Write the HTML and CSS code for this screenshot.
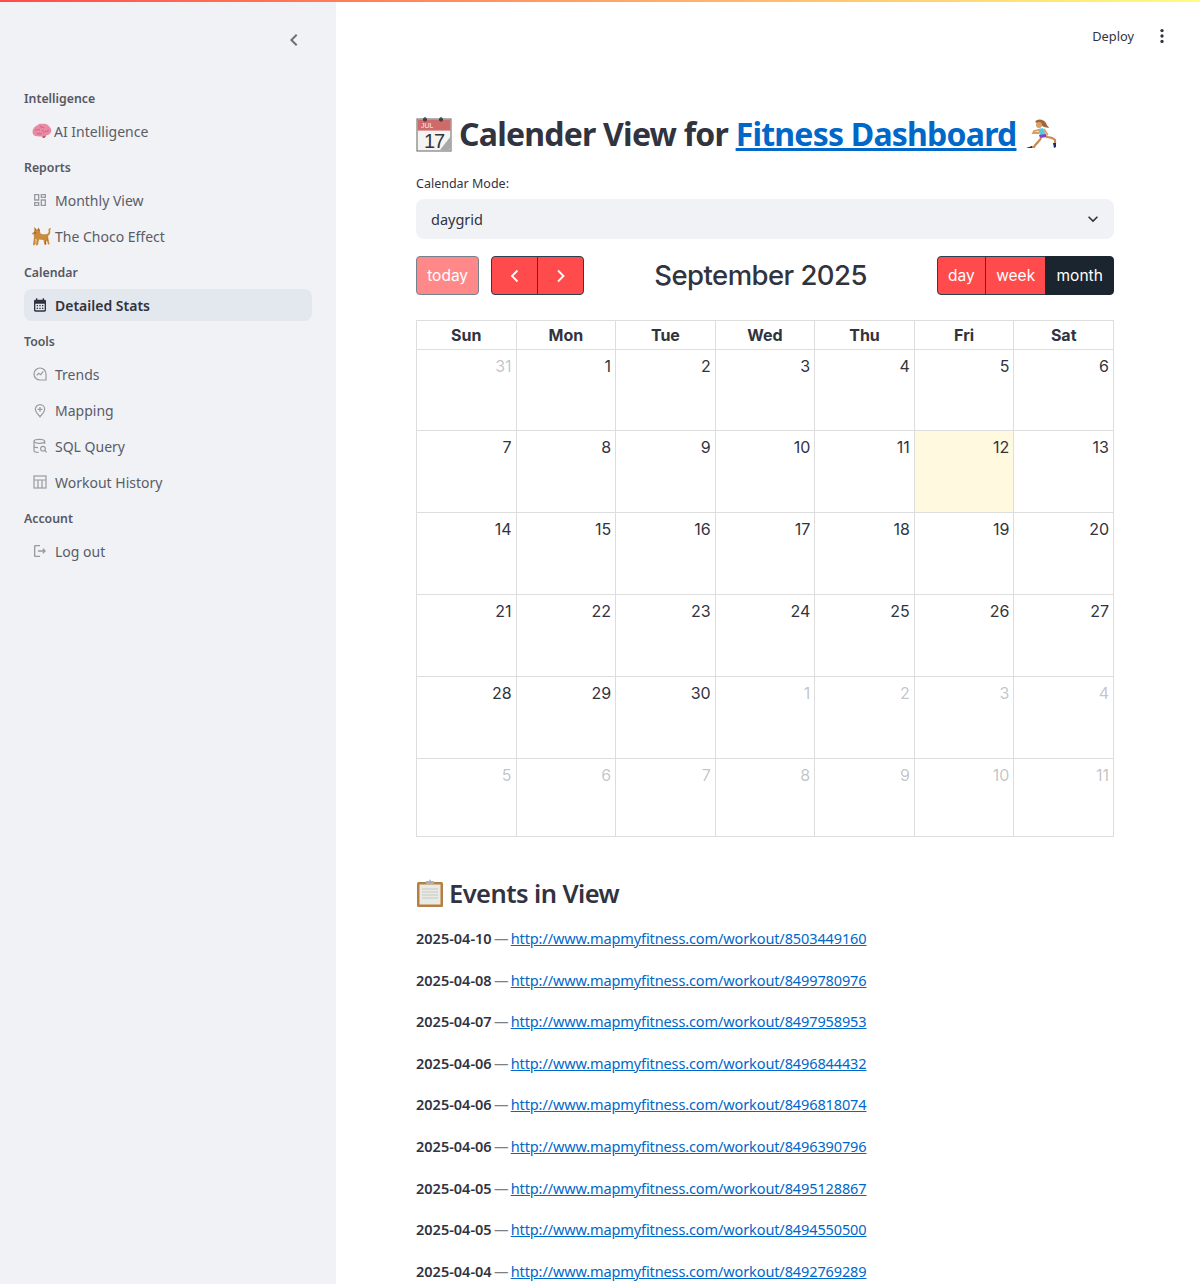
FILE: index.html
```html
<!DOCTYPE html>
<html lang="en">
<head>
<meta charset="utf-8">
<title>Calender View for Fitness Dashboard</title>
<link rel="stylesheet" href="styles.css">
</head>
<body>
<div class="decoration"></div>
<div class="app">
  <aside class="sidebar">
    <div class="side-head">
      <svg class="collapse" viewBox="0 0 24 24" width="24" height="24"><path d="M15.4 7.4 14 6l-6 6 6 6 1.4-1.4L10.8 12z" fill="#6b6d78"/></svg>
    </div>
    <nav class="nav">
      <div class="group-label">Intelligence</div>
      <a class="item">
        <svg class="ico" viewBox="0 0 20 20" width="20" height="20"><path d="M.5 11c0-3 2-5.500 4.500-6.500C6.500 2.500 9 2.500 11 3c2.500-.5 5 .5 6 2.500 2 1 2.800 3.500 2 5.500-.5 2-2.500 3-4.500 3.200-1 .8-1.500 2.800-3 2.800-1 0-1.500-.8-2-1.800-1.500.5-2.500.3-3.500 0C3 15.500.5 14 .5 11z" fill="#ea89a4"/><path d="M3 9.500c2-2 3 0 5-1M8 5c1 2 3 1 4 2M5 12.500c2 0 3 1 5 0M13 10c1 1 3 0 4-1M10 9c1 1 2 1 2 3" stroke="#c65f7f" stroke-width=".9" fill="none"/><path d="M10.500 15.500c.5 1 1 1.500 1.500 1.500 1 0 1.500-1.500 2-2.500z" fill="#b9566f"/></svg>
        <span>AI Intelligence</span>
      </a>
      <div class="group-label">Reports</div>
      <a class="item">
        <svg class="ico mi" viewBox="0 0 24 24" width="16" height="16"><path d="M19 5v2h-4V5h4M9 5v6H5V5h4m10 8v6h-4v-6h4M9 17v2H5v-2h4M21 3h-8v6h8V3zM11 3H3v10h8V3zm10 8h-8v10h8V11zM11 15H3v6h8v-6z"/></svg>
        <span>Monthly View</span>
      </a>
      <a class="item">
        <svg class="ico" viewBox="0 0 20 20" width="20" height="20"><path d="M2.500 1 4 3.500l2-.5.500-1.500L8 5l.5 2.500c2 1 4.500 1 6.500.5 1.500-1 2-2 1.500-3.500-.4-1.200.8-2.500 2-2.500l.5 1c-.8 0-1 .5-.8 1.500.5 2.500-.5 4.500-2.200 5.500l1 6.500 1 1.500-2 .5-1-4-1 1.500.5 2.500-2 .5-1-5-4.500-.5-1 5.500-2 .5.500-6-1-1-.5 6.500-2 .5 1-9-.5-2-2-1L2 6z" fill="#ca8b3e"/><path d="M2.500 1 4 3.500 3.500 5zM6.500 1.500 8 5 6.500 4.500zM2 6l2.500.5L3 8zM13 13l1 5h-1zM4 12l-.5 6H3zM15.500 9l.8 7h-.5z" fill="#8a5a24"/></svg>
        <span class="after-emoji">The Choco Effect</span>
      </a>
      <div class="group-label">Calendar</div>
      <a class="item active">
        <svg class="ico mi" viewBox="0 0 24 24" width="16" height="16"><path d="M19 4h-1V2h-2v2H8V2H6v2H5c-1.100 0-2 .9-2 2v14c0 1.100.9 2 2 2h14c1.100 0 2-.9 2-2V6c0-1.100-.9-2-2-2zm0 16H5V10h14v10zM9 14H7v-2h2v2zm4 0h-2v-2h2v2zm4 0h-2v-2h2v2zm-8 4H7v-2h2v2zm4 0h-2v-2h2v2zm4 0h-2v-2h2v2z"/></svg>
        <span>Detailed Stats</span>
      </a>
      <div class="group-label">Tools</div>
      <a class="item">
        <svg class="ico ms" viewBox="0 0 24 24" width="16" height="16"><path d="M21 21h-9a9 9 0 1 1 9-9z"/><path d="M7 14l3-3 3 2 4-5"/></svg>
        <span>Trends</span>
      </a>
      <a class="item">
        <svg class="ico ms" viewBox="0 0 24 24" width="16" height="16"><path d="M12 22c-1-2-7-5-7-11a7 7 0 0 1 14 0c0 6-6 9-7 11z"/><path d="M12 7.500v7M8.500 11h7"/></svg>
        <span>Mapping</span>
      </a>
      <a class="item">
        <svg class="ico ms" viewBox="0 0 24 24" width="16" height="16"><ellipse cx="11" cy="5" rx="8" ry="3"/><path d="M3 5v14c0 1.500 3 2.500 7 2.500M19 5v4M3 12c0 1.500 3 2.500 6 2.500"/><circle cx="16.500" cy="16" r="3.500"/><path d="M19 18.500l3 3"/></svg>
        <span>SQL Query</span>
      </a>
      <a class="item">
        <svg class="ico ms" viewBox="0 0 24 24" width="16" height="16"><rect x="3" y="3" width="18" height="18"/><path d="M3 9h18M9 9v12M15 9v12"/></svg>
        <span>Workout History</span>
      </a>
      <div class="group-label">Account</div>
      <a class="item">
        <svg class="ico mi" viewBox="0 0 24 24" width="16" height="16"><path d="M17 8l-1.410 1.410L17.170 11H9v2h8.170l-1.580 1.580L17 16l4-4zM5 5h7V3H5c-1.100 0-2 .9-2 2v14c0 1.100.9 2 2 2h7v-2H5V5z"/></svg>
        <span>Log out</span>
      </a>
    </nav>
  </aside>
  <main class="main">
    <header class="topbar">
      <span class="deploy">Deploy</span>
      <svg class="kebab" viewBox="0 0 24 24" width="20" height="20"><circle cx="12" cy="5.500" r="2"/><circle cx="12" cy="12" r="2"/><circle cx="12" cy="18.500" r="2"/></svg>
    </header>
    <div class="content">
      <h1 class="title">
        <svg class="emoji-cal" viewBox="0 0 36 36" width="36" height="36">
          <rect x="1" y="3" width="34" height="32" fill="#f4f4f4" stroke="#7d7d7d" stroke-width="1.200"/>
          <rect x="1.600" y="3.600" width="32.800" height="11" fill="#cf6a6a"/>
          <circle cx="9" cy="3.500" r="2" fill="#333"/><circle cx="25" cy="3.500" r="2" fill="#333"/>
          <path d="M9 1v5M25 1v5" stroke="#555" stroke-width="1"/>
          <text x="5" y="12" class="cal-mon">JUL</text>
          <text x="8" y="32" class="cal-day">17</text>
          <path d="M35 20 24 34h9l2-2z" fill="#a8a8a8"/>
        </svg>
        <span>Calender View for <a class="title-link">Fitness Dashboard</a></span>
        <svg class="emoji-run" viewBox="0 0 34 34" width="34" height="34">
          <path d="M11 5c2-4 9-3 11 1 1 3 3 4 3 5l-5-1-3-2z" fill="#a0683a"/>
          <circle cx="15" cy="8" r="3" fill="#d9a066"/>
          <path d="M14 12l5-1 3 7-6 1z" fill="#5cc8dc"/>
          <path d="M15 18l7-1 1 3-7 1z" fill="#8a3fc2"/>
          <path d="M15 13l-5 1-1 2 6 0M20 12l3 5 1 1" stroke="#d9a066" stroke-width="1.800" fill="none"/>
          <path d="M17 21c-1 3-5 5-7 9l-3 0M22 20c3 0 7 1 9 3l0 5" stroke="#c48a58" stroke-width="2.200" fill="none"/>
          <path d="M2 31h6v-2l-3 1zM29 26l3 0 0 4-2 1z" fill="#1f2a6d"/>
        </svg>
      </h1>
      <label class="field-label">Calendar Mode:</label>
      <div class="select">
        <span>daygrid</span>
        <svg viewBox="0 0 24 24" width="20" height="20"><path d="M16.600 8.600 12 13.200 7.400 8.600 6 10l6 6 6-6z" fill="#31333f"/></svg>
      </div>
      <div class="cal-toolbar">
        <div class="tb-chunk">
          <button class="btn today">today</button>
          <div class="btn-group">
            <button class="btn nav-btn"><svg viewBox="0 0 16 16" width="16" height="16"><path d="M10.500 2.500 5 8l5.500 5.500" fill="none" stroke="#fff" stroke-width="1.800"/></svg></button>
            <button class="btn nav-btn"><svg viewBox="0 0 16 16" width="16" height="16"><path d="M5 2.500 10.500 8 5 13.500" fill="none" stroke="#fff" stroke-width="1.800"/></svg></button>
          </div>
        </div>
        <h2 class="cal-title">September 2025</h2>
        <div class="btn-group">
          <button class="btn">day</button>
          <button class="btn">week</button>
          <button class="btn on">month</button>
        </div>
      </div>
      <table class="cal">
        <thead><tr><th>Sun</th><th>Mon</th><th>Tue</th><th>Wed</th><th>Thu</th><th>Fri</th><th>Sat</th></tr></thead>
        <tbody>
          <tr class="r1"><td class="off">31</td><td>1</td><td>2</td><td>3</td><td>4</td><td>5</td><td>6</td></tr>
          <tr><td>7</td><td>8</td><td>9</td><td>10</td><td>11</td><td class="now">12</td><td>13</td></tr>
          <tr><td>14</td><td>15</td><td>16</td><td>17</td><td>18</td><td>19</td><td>20</td></tr>
          <tr><td>21</td><td>22</td><td>23</td><td>24</td><td>25</td><td>26</td><td>27</td></tr>
          <tr><td>28</td><td>29</td><td>30</td><td class="off">1</td><td class="off">2</td><td class="off">3</td><td class="off">4</td></tr>
          <tr class="r6"><td class="off">5</td><td class="off">6</td><td class="off">7</td><td class="off">8</td><td class="off">9</td><td class="off">10</td><td class="off">11</td></tr>
        </tbody>
      </table>
      <h2 class="events-title">
        <svg viewBox="0 0 28 30" width="28" height="30"><rect x="1" y="4" width="26" height="25" rx="1.500" fill="#b5803f"/><rect x="3.500" y="6.500" width="21" height="20" fill="#e9e9e6"/><path d="M6 11h16M6 14h16M6 17h16M6 20h16" stroke="#d2d2d0" stroke-width="1.500"/><path d="M10 6V3h3l1-2 1 2h3v3z" fill="#a9b0b8"/></svg>
        <span>Events in View</span>
      </h2>
      <ul class="events">
        <li><b>2025-04-10</b> <i>—</i> <a>http://www.mapmyfitness.com/workout/8503449160</a></li>
        <li><b>2025-04-08</b> <i>—</i> <a>http://www.mapmyfitness.com/workout/8499780976</a></li>
        <li><b>2025-04-07</b> <i>—</i> <a>http://www.mapmyfitness.com/workout/8497958953</a></li>
        <li><b>2025-04-06</b> <i>—</i> <a>http://www.mapmyfitness.com/workout/8496844432</a></li>
        <li><b>2025-04-06</b> <i>—</i> <a>http://www.mapmyfitness.com/workout/8496818074</a></li>
        <li><b>2025-04-06</b> <i>—</i> <a>http://www.mapmyfitness.com/workout/8496390796</a></li>
        <li><b>2025-04-05</b> <i>—</i> <a>http://www.mapmyfitness.com/workout/8495128867</a></li>
        <li><b>2025-04-05</b> <i>—</i> <a>http://www.mapmyfitness.com/workout/8494550500</a></li>
        <li><b>2025-04-04</b> <i>—</i> <a>http://www.mapmyfitness.com/workout/8492769289</a></li>
      </ul>
    </div>
  </main>
</div>
</body>
</html>
```
FILE: styles.css
```css
* { box-sizing: border-box; }
html, body { margin: 0; height: 100%; overflow: hidden; }
body { font-family: "Noto Sans", sans-serif; color: #31333f; background: #fff; }
.decoration { position: absolute; top: 0; left: 0; right: 0; height: 2px; background: linear-gradient(90deg, #ff4b4b, #fffd80); z-index: 2; }
.app { display: flex; height: 1284px; }

.sidebar { width: 336px; flex: none; background: #f0f2f6; padding: 0 24px; }
.side-head { height: 86px; display: flex; justify-content: flex-end; padding: 28px 6px 0 0; }
.collapse { display: block; }
.nav { display: flex; flex-direction: column; }
.group-label { height: 24px; line-height: 26px; margin: 8px 0 5px; font-size: 12.300px; font-weight: 600; color: #565863; }
.group-label:first-child { margin-top: 0; }
.item { display: flex; align-items: center; height: 32px; padding-left: 8px; margin-bottom: 4px; border-radius: 8px; font-size: 14px; color: #5a5c67; }
.item + .group-label { margin-top: 4px; }
.item .ico { flex: none; }
.item span { margin-left: 2px; }
.item span.after-emoji { margin-left: 3px; }
.item .mi, .item .ms { margin: 0 5px 0 0; width: 16px; }
.mi { fill: #989aa2; }
.ms { fill: none; stroke: #989aa2; stroke-width: 1.800; }
.item.active { background: #e3e7ee; color: #31333f; font-weight: 600; }
.item.active .mi { fill: #31333f; }

.main { flex: 1; min-width: 0; }
.topbar { height: 72px; display: flex; align-items: center; justify-content: flex-end; gap: 18px; padding-right: 28px; }
.deploy { font-size: 12.800px; color: #31333f; }
.kebab { fill: #31333f; }
.content { padding: 0 86px 0 80px; }

.title { display: flex; align-items: center; gap: 7px; height: 62px; margin: 31px 0 0; font-size: 32px; font-weight: 700; line-height: 62px; color: #31333f; letter-spacing: -0.780px; }
.title-link { color: #0068c9; text-decoration: underline; text-decoration-thickness: 3px; }
.emoji-run { margin-left: 1px; }
.cal-mon { font: 7px "Liberation Sans", sans-serif; fill: #fbeaea; letter-spacing: 0; }
.cal-day { font: 20px "Liberation Sans", sans-serif; fill: #333; letter-spacing: -1px; }

.field-label { display: block; height: 20px; line-height: 20px; margin-top: 9px; font-size: 12.500px; color: #31333f; }
.select { display: flex; align-items: center; justify-content: space-between; height: 40px; margin-top: 5px; padding: 0 11px 0 15px; background: #f0f2f6; border-radius: 8px; font-size: 14.500px; }

.cal-toolbar { display: flex; align-items: center; justify-content: space-between; margin-top: 17px; font-family: Inter, sans-serif; }
.tb-chunk { display: flex; gap: 12px; }
.btn-group { display: flex; }
.btn { display: flex; align-items: center; justify-content: center; height: 39px; padding: 0 10.200px; border: 1px solid #2c3e50; background: #ff4b4b; color: #fff; font: 400 15.500px Inter, sans-serif; border-radius: 4px; }
.btn-group .btn:not(:first-child) { border-radius: 0 4px 4px 0; margin-left: -1px; }
.btn-group .btn:not(:last-child) { border-radius: 4px 0 0 4px; }
.btn-group .btn:not(:first-child):not(:last-child) { border-radius: 0; }
.btn.today { opacity: .65; }
.btn.nav-btn { width: 47px; }
.btn.on { background: #1a252f; border-color: #1a252f; }
.cal-title { margin: 0; padding-bottom: 2px; font: 500 27.500px Inter, sans-serif; letter-spacing: -0.550px; color: #31333f; }

.cal { width: 698px; margin-top: 25px; border-collapse: collapse; table-layout: fixed; font-family: Inter, sans-serif; font-size: 16px; }
.cal th { height: 29px; padding: 0; border: 1px solid #ddd; font-weight: 700; text-align: center; }
.cal td { height: 82px; padding: 4px; border: 1px solid #ddd; vertical-align: top; text-align: right; line-height: 24px; }
.cal .r1 td { height: 81px; }
.cal .r6 td { height: 78px; }
.cal td.off { color: rgba(49,51,63,.3); }
.cal td.now { background: #fff9e0; }

.events-title { display: flex; align-items: center; gap: 5px; height: 40px; margin: 36px 0 0; font-size: 25.500px; font-weight: 600; letter-spacing: -0.550px; }
.events { list-style: none; margin: 13px 0 0; padding: 0; font-size: 14.500px; line-height: 25.600px; word-spacing: -1.500px; }
.events li { margin-bottom: 16px; }
.events b { font-weight: 600; }
.events i { font-style: normal; color: #7d7f88; }
.events a { color: #0068c9; text-decoration: underline; letter-spacing: -0.110px; }
```
